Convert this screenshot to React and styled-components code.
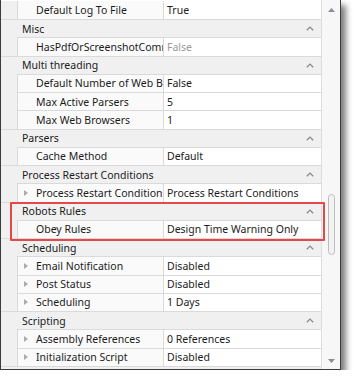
import styled, { createGlobalStyle } from 'styled-components';

const GlobalStyle = createGlobalStyle`
  html, body {
    margin: 0;
    padding: 0;
    background: #ffffff;
  }
  body {
    font-family: 'Noto Sans', 'Open Sans', sans-serif;
    font-size: 10.5px;
    color: #1b1b1b;
  }
`;

const Frame = styled.div`
  position: relative;
  display: flex;
  width: 341px;
  height: 370px;
  box-sizing: border-box;
  border: 1px solid #3c3c3c;
  border-top: none;
  background: #ffffff;
  box-shadow: 5px 5px 6px rgba(0, 0, 0, 0.5);
  overflow: hidden;
`;

const Grid = styled.div`
  flex: 1;
  display: flex;
  flex-direction: column;
  margin-top: 0.75px;
  min-width: 0;
`;

const CategoryRow = styled.div`
  display: flex;
  align-items: center;
  flex: none;
  height: 18.25px;
  box-sizing: border-box;
  border-top: 1px solid #dadada;
  background: #f0f0f0;
  padding: 0 7px 0 21px;
`;

const CategoryTitle = styled.span`
  flex: 1;
  white-space: nowrap;
  overflow: hidden;
`;

const PropRow = styled.div`
  display: flex;
  flex: none;
  height: 18.25px;
  background: #f0f0f0;
`;

const Gutter = styled.div`
  width: 16px;
  flex: none;
`;

const NameCell = styled.div`
  display: flex;
  align-items: center;
  width: 146px;
  flex: none;
  box-sizing: border-box;
  border-left: 1px solid #dadada;
  border-top: ${(p) => (p.$noTop ? 'none' : '1px solid #dadada')};
  background: #fafafa;
  padding-left: ${(p) => (p.$expandable ? '6px' : '18px')};
  white-space: nowrap;
  overflow: hidden;
  text-overflow: clip;
`;

const ValueCell = styled.div`
  display: flex;
  align-items: center;
  flex: 1;
  min-width: 0;
  box-sizing: border-box;
  border-left: 1px solid #dadada;
  border-top: ${(p) => (p.$noTop ? 'none' : '1px solid #dadada')};
  background: #ffffff;
  padding-left: 3px;
  color: ${(p) => (p.$readOnly ? '#9a9a9a' : '#1b1b1b')};
  white-space: nowrap;
  overflow: hidden;
`;

const Expander = styled.span`
  display: inline-block;
  flex: none;
  width: 0;
  height: 0;
  margin-right: 8px;
  border-top: 3.5px solid transparent;
  border-bottom: 3.5px solid transparent;
  border-left: 4px solid #ababab;
`;

const ScrollBar = styled.div`
  width: 18px;
  flex: none;
  display: flex;
  flex-direction: column;
  align-items: center;
  border-left: 1px solid #dedede;
  background: #f7f7f7;
`;

const ArrowBox = styled.div`
  height: ${(p) => p.$h}px;
  display: flex;
  align-items: center;
  justify-content: center;
  flex: none;
`;

const Track = styled.div`
  flex: 1;
  display: flex;
  flex-direction: column;
  align-items: center;
`;

const Thumb = styled.div`
  width: 7px;
  height: 61px;
  box-sizing: border-box;
  border: 1px solid #bdbdbd;
  border-radius: 4px;
  background: #f2f2f2;
`;

const Highlight = styled.div`
  position: absolute;
  left: 9px;
  top: 202px;
  width: 315px;
  height: 39px;
  box-sizing: border-box;
  border: 2px solid #e8474a;
  border-radius: 1px;
  pointer-events: none;
`;

const Chevron = () => (
  <svg width="8" height="5" viewBox="0 0 8 5">
    <path d="M0.8 4.3 L4 1.1 L7.2 4.3" fill="none" stroke="#8a8a8a" strokeWidth="1.3" />
  </svg>
);

const Arrow = ({ down }) => (
  <svg width="7" height="4" viewBox="0 0 7 4">
    <path d={down ? 'M0 0 H7 L3.5 4 Z' : 'M0 4 H7 L3.5 0 Z'} fill="#8c8c99" />
  </svg>
);

const rows = [
  { name: 'Default Log To File', value: 'True', noTop: true },
  { cat: 'Misc' },
  { name: 'HasPdfOrScreenshotCommand', value: 'False', readOnly: true },
  { cat: 'Multi threading' },
  { name: 'Default Number of Web Browsers', value: 'False' },
  { name: 'Max Active Parsers', value: '5' },
  { name: 'Max Web Browsers', value: '1' },
  { cat: 'Parsers' },
  { name: 'Cache Method', value: 'Default' },
  { cat: 'Process Restart Conditions' },
  { name: 'Process Restart Conditions', value: 'Process Restart Conditions', expandable: true },
  { cat: 'Robots Rules' },
  { name: 'Obey Rules', value: 'Design Time Warning Only' },
  { cat: 'Scheduling' },
  { name: 'Email Notification', value: 'Disabled', expandable: true },
  { name: 'Post Status', value: 'Disabled', expandable: true },
  { name: 'Scheduling', value: '1 Days', expandable: true },
  { cat: 'Scripting' },
  { name: 'Assembly References', value: '0 References', expandable: true },
  { name: 'Initialization Script', value: 'Disabled', expandable: true },
  { cat: 'Self Contained Agents' },
];

export default function App() {
  return (
    <>
      <GlobalStyle />
      <Frame>
        <Grid>
          {rows.map((r, i) =>
            r.cat ? (
              <CategoryRow key={i}>
                <CategoryTitle>{r.cat}</CategoryTitle>
                <Chevron />
              </CategoryRow>
            ) : (
              <PropRow key={i}>
                <Gutter />
                <NameCell $noTop={r.noTop} $expandable={r.expandable}>
                  {r.expandable && <Expander />}
                  {r.name}
                </NameCell>
                <ValueCell $noTop={r.noTop} $readOnly={r.readOnly}>
                  {r.value}
                </ValueCell>
              </PropRow>
            )
          )}
        </Grid>
        <ScrollBar>
          <ArrowBox $h={20}>
            <Arrow />
          </ArrowBox>
          <Track>
            <Thumb style={{ marginTop: 174 }} />
          </Track>
          <ArrowBox $h={17}>
            <Arrow down />
          </ArrowBox>
        </ScrollBar>
        <Highlight />
      </Frame>
    </>
  );
}
